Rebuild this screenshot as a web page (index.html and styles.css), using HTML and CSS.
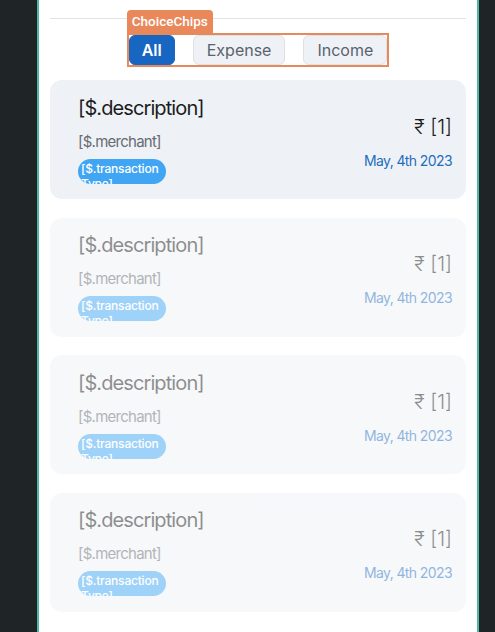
FILE: index.html
```html
<!DOCTYPE html>
<html lang="en">
<head>
<meta charset="utf-8">
<title>Transactions</title>
<link rel="stylesheet" href="styles.css">
</head>
<body>
<div class="panel">
  <div class="divider"></div>
  <div class="chips-row">
    <div class="chips-group">
      <span class="chips-tag">ChoiceChips</span>
      <button class="chip chip-active">All</button>
      <button class="chip">Expense</button>
      <button class="chip">Income</button>
    </div>
  </div>
  <div class="list">
    <div class="card">
      <div class="card-left">
        <div class="desc">[$.description]</div>
        <div class="merchant">[$.merchant]</div>
        <div class="type-chip">[$.transaction Type]</div>
      </div>
      <div class="card-right">
        <div class="amount">₹ [1]</div>
        <div class="date">May, 4th 2023</div>
      </div>
    </div>
    <div class="card card-dim">
      <div class="card-left">
        <div class="desc">[$.description]</div>
        <div class="merchant">[$.merchant]</div>
        <div class="type-chip">[$.transaction Type]</div>
      </div>
      <div class="card-right">
        <div class="amount">₹ [1]</div>
        <div class="date">May, 4th 2023</div>
      </div>
    </div>
    <div class="card card-dim">
      <div class="card-left">
        <div class="desc">[$.description]</div>
        <div class="merchant">[$.merchant]</div>
        <div class="type-chip">[$.transaction Type]</div>
      </div>
      <div class="card-right">
        <div class="amount">₹ [1]</div>
        <div class="date">May, 4th 2023</div>
      </div>
    </div>
    <div class="card card-dim">
      <div class="card-left">
        <div class="desc">[$.description]</div>
        <div class="merchant">[$.merchant]</div>
        <div class="type-chip">[$.transaction Type]</div>
      </div>
      <div class="card-right">
        <div class="amount">₹ [1]</div>
        <div class="date">May, 4th 2023</div>
      </div>
    </div>
  </div>
</div>
</body>
</html>
```
FILE: styles.css
```css
html, body {
  margin: 0;
  padding: 0;
  background: #1f2427;
  height: 100%;
  overflow: hidden;
}
body {
  font-family: Inter, "Noto Sans", sans-serif;
}
.panel {
  margin-left: 37px;
  width: 442px;
  box-sizing: border-box;
  min-height: 700px;
  background: #ffffff;
  border-left: 2px solid #4fb8a6;
  border-right: 2px solid #4fb8a6;
  padding: 18px 11px 0 11px;
}
.divider {
  height: 1px;
  background: #e2e2e2;
}
.chips-row {
  display: flex;
  justify-content: center;
  margin-top: 14px;
}
.chips-group {
  position: relative;
  display: flex;
  gap: 18px;
  border: 2px solid #e68a5d;
  height: 30px;
}
.chips-tag {
  position: absolute;
  left: -2px;
  top: -25px;
  height: 23px;
  width: 86px;
  box-sizing: border-box;
  background: #e8885b;
  color: #ffffff;
  border-radius: 4px 4px 0 0;
  font-family: Roboto, sans-serif;
  font-weight: 500;
  font-size: 13.5px;
  line-height: 23px;
  padding-left: 5px;
}
.chip {
  font-family: Inter, sans-serif;
  font-size: 16px;
  height: 30px;
  box-sizing: border-box;
  border-radius: 6px;
  background: #eef2f7;
  border: 1px solid #dce1e7;
  color: #5a626c;
  padding: 0 13px;
  margin: 0;
}
.chip-active {
  background: #1766c2;
  border-color: #1766c2;
  color: #ffffff;
  font-weight: 600;
  padding: 0 12px;
}
.list {
  display: flex;
  flex-direction: column;
  gap: 18.5px;
  margin-top: 13px;
}
.card {
  height: 119px;
  box-sizing: border-box;
  background: #eef2f7;
  border-radius: 12px;
  display: flex;
  justify-content: space-between;
  align-items: center;
  padding: 0 14px 0 28px;
}
.card-dim {
  opacity: 0.5;
}
.card-left {
  display: flex;
  flex-direction: column;
  align-items: flex-start;
}
.desc {
  font-size: 20px;
  line-height: 24px;
  letter-spacing: -0.9px;
  color: #1c1c1c;
}
.merchant {
  font-size: 15px;
  line-height: 18px;
  letter-spacing: -0.75px;
  color: #666b71;
  margin-top: 13px;
}
.type-chip {
  margin-top: 8px;
  width: 88px;
  height: 25px;
  box-sizing: border-box;
  overflow: hidden;
  background: #40a6f4;
  color: #ffffff;
  border-radius: 13px;
  font-size: 12px;
  font-weight: 500;
  line-height: 15px;
  letter-spacing: -0.2px;
  padding: 2px 2px 0 3px;
}
.card-right {
  display: flex;
  flex-direction: column;
  align-items: flex-end;
  margin-top: 4px;
}
.amount {
  font-size: 20px;
  font-weight: 300;
  line-height: 24px;
  color: #1c1c1c;
}
.date {
  font-size: 14px;
  line-height: 17px;
  letter-spacing: -0.6px;
  color: #1f6dbd;
  margin-top: 13px;
}
```
